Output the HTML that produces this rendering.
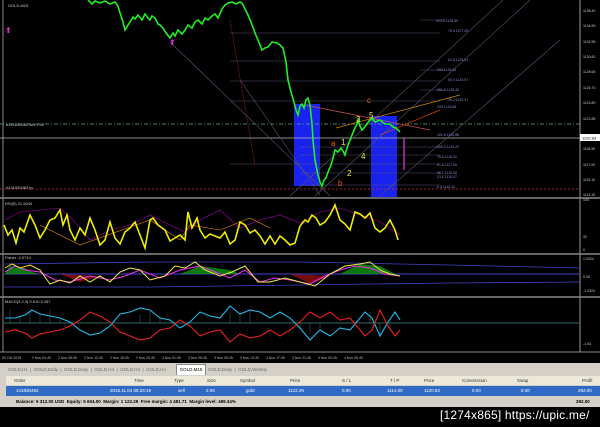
<!DOCTYPE html>
<html><head><style>
body{margin:0;width:600px;height:427px;background:#000;overflow:hidden;font-family:"Liberation Sans",sans-serif}
svg{position:absolute;left:0;top:0}
.t{font-size:4px;fill:#ccc}
</style></head><body>
<svg width="600" height="427" viewBox="0 0 600 427">
<rect width="600" height="427" fill="#000"/>
<line x1="3" y1="0" x2="3" y2="352" stroke="#888" stroke-width="1"/>
<line x1="580" y1="0" x2="580" y2="352" stroke="#999" stroke-width="1"/>
<line x1="0" y1="198" x2="600" y2="198" stroke="#888" stroke-width="1.5"/>
<line x1="0" y1="254" x2="600" y2="254" stroke="#888" stroke-width="1.5"/>
<line x1="0" y1="297" x2="600" y2="297" stroke="#888" stroke-width="1.5"/>
<line x1="0" y1="352" x2="600" y2="352" stroke="#888" stroke-width="1"/>
<rect x="294" y="104" width="26" height="82" fill="#1a22ee"/>
<rect x="371" y="116" width="26" height="81" fill="#1a22ee"/>
<line x1="0" y1="138" x2="600" y2="138" stroke="#bbb" stroke-width="0.8"/>
<line x1="0" y1="124" x2="580" y2="124" stroke="#6a8" stroke-width="0.7" stroke-dasharray="4,2,1,2"/>
<line x1="0" y1="189" x2="580" y2="189" stroke="#c33" stroke-width="0.7" stroke-dasharray="2,2"/>
<g stroke="#557" stroke-width="0.6">
<line x1="230" y1="33" x2="440" y2="33"/><line x1="230" y1="61" x2="440" y2="61"/><line x1="230" y1="81" x2="440" y2="81"/><line x1="230" y1="101" x2="440" y2="101"/><line x1="230" y1="164" x2="440" y2="164"/><line x1="300" y1="147" x2="440" y2="147"/><line x1="300" y1="155" x2="440" y2="155"/><line x1="300" y1="173" x2="440" y2="173"/><line x1="300" y1="185" x2="440" y2="185"/>
<line x1="420" y1="20" x2="445" y2="20"/><line x1="420" y1="70" x2="445" y2="70"/><line x1="420" y1="90" x2="445" y2="90"/>
</g>
<g stroke="#557" stroke-width="0.6" fill="none">
<line x1="170" y1="42" x2="330" y2="196"/>
<line x1="290" y1="196" x2="503" y2="0"/>
<line x1="315" y1="196" x2="530" y2="0"/>
<line x1="380" y1="196" x2="560" y2="40"/>
<line x1="240" y1="80" x2="320" y2="195"/>
</g>
<line x1="336" y1="128" x2="460" y2="95" stroke="#c80" stroke-width="0.7"/>
<line x1="380" y1="135" x2="440" y2="110" stroke="#c40" stroke-width="0.7"/>
<line x1="305" y1="105" x2="430" y2="130" stroke="#c55" stroke-width="0.7"/>
<line x1="230" y1="20" x2="255" y2="165" stroke="#a22" stroke-width="0.8" stroke-dasharray="1,1"/>
<line x1="404" y1="138" x2="404" y2="170" stroke="#e3e" stroke-width="1.2"/>
<polyline fill="none" stroke="#2e2" stroke-width="1.6" points="88,0 92,4 95,1 100,3 105,1 110,4 115,2 118,6 120,13 123,22 125,30 128,25 130,22 133,17 135,19 138,15 142,20 145,14 148,18 150,20 152,16 155,18 158,24 160,25 163,28 166,33 170,38 173,33 175,36 178,30 182,34 185,30 188,25 192,28 195,22 198,20 202,24 205,18 208,20 212,16 215,14 218,18 222,9 225,5 228,3 232,2 236,4 240,2 242,3 245,9 248,15 251,22 255,33 258,40 262,50 265,48 268,47 272,42 277,43 280,45 283,48 286,62 288,80 291,92 294,102 296,110 298,115 300,106 302,104 304,108 306,100 308,98 310,105 312,124 313,140 315,160 318,175 320,182 322,186 324,180 326,178 328,172 331,165 333,158 335,150 338,152 341,148 343,151 345,155 347,148 350,140 352,135 355,128 357,124 358,120 360,126 362,130 364,128 366,125 369,121 372,118 375,122 380,120 385,124 390,124 393,127 396,128 398,130 400,132"/>
<text x="356" y="122" font-size="8" fill="#ee3">3</text><text x="369" y="118" font-size="8" fill="#ee3">5</text>
<text x="341" y="145" font-size="8" fill="#ee3">1</text><text x="361" y="159" font-size="8" fill="#ee3">4</text>
<text x="347" y="176" font-size="8" fill="#ee3">2</text>
<text x="331" y="146" font-size="8" fill="#f60">a</text><text x="338" y="186" font-size="8" fill="#f42">b</text><text x="367" y="103" font-size="8" fill="#f60">c</text>
<text x="8" y="7" class="t">GOLD,M15</text>
<text x="6" y="126" class="t">#141830462 sell 2.00</text>
<text x="6" y="189" class="t">#141830462 tp</text>
<text x="5" y="33" font-size="8" fill="#d3d">⬆</text><text x="169" y="45" font-size="8" fill="#d3d">⬆</text>
<g class="t" style="font-size:3.5px;fill:#88c">
<text x="436" y="22">423.6 1128.89</text><text x="448" y="32">78.6 1127.25</text><text x="448" y="61">61.8 1126.51</text><text x="437" y="71">300 1126.53</text><text x="448" y="81">50.0 1125.97</text><text x="437" y="91">261.8 1125.40</text><text x="448" y="101">38.2 1125.37</text><text x="437" y="108">200 1124.68</text><text x="437" y="136">161.8 1120.88</text><text x="437" y="148">100.0 1119.29</text><text x="437" y="158">78.6 1118.41</text><text x="437" y="166">61.8 1117.69</text><text x="437" y="174">38.2 1116.58</text><text x="437" y="178">23.6 1115.47</text><text x="437" y="188">0.0 1114.22</text>
</g>
<g class="t" style="font-size:3.5px">
<text x="583" y="12">1136.40</text><text x="583" y="27">1134.50</text><text x="583" y="43">1132.55</text><text x="583" y="58">1130.60</text><text x="583" y="73">1128.65</text><text x="583" y="89">1126.70</text><text x="583" y="104">1124.80</text><text x="583" y="120">1122.85</text><text x="583" y="150">1118.95</text><text x="583" y="166">1117.00</text><text x="583" y="181">1115.10</text><text x="583" y="196">1113.15</text>
</g>
<rect x="580" y="134" width="20" height="7" fill="#fff"/><text x="582" y="139.5" font-size="4" fill="#000">1120.83</text>
<text x="5" y="205" class="t">RSI(5) 21.5044</text>
<polyline fill="none" stroke="#a0a" stroke-width="0.6" points="5,220 20,212 40,210 60,208 75,222 90,240 110,230 130,225 150,215 170,225 185,232 200,220 220,210 240,228 260,220 280,215 300,223 320,212 340,208 360,215 380,222 400,235"/>
<polyline fill="none" stroke="#e80" stroke-width="0.6" points="40,225 80,245 150,220 180,240 190,225 220,230 250,218 270,228"/>
<polyline fill="none" stroke="#ee0" stroke-width="1.6" points="4,225 8,235 12,230 16,243 20,228 24,232 30,215 35,225 40,238 45,230 50,220 55,218 60,210 63,225 67,215 70,230 75,240 80,228 85,235 90,218 95,230 100,245 105,240 110,222 115,238 120,244 125,232 130,228 135,222 140,235 145,248 150,220 153,218 158,225 165,230 170,241 175,238 180,235 185,240 188,212 192,228 197,218 200,230 205,238 210,234 215,236 220,238 225,232 230,244 235,240 240,222 245,225 250,233 255,230 260,236 265,244 270,236 275,244 280,236 285,240 290,245 295,243 300,226 305,220 308,222 312,215 316,218 320,225 325,222 330,215 335,205 340,220 345,224 350,230 355,212 360,214 365,218 370,213 375,228 380,232 385,228 390,220 395,230 398,240"/>
<g class="t" style="font-size:3.5px"><text x="583" y="201">100</text><text x="583" y="238">32</text><text x="583" y="251">0</text></g>
<text x="5" y="259" class="t">Fisher -4.0714</text>
<line x1="4" y1="274" x2="580" y2="274" stroke="#44c" stroke-width="1"/>
<polyline fill="none" stroke="#44c" stroke-width="0.8" points="4,264 150,262 300,262 450,265 580,268"/>
<polyline fill="none" stroke="#44c" stroke-width="0.8" points="4,287 150,287 300,285 450,283 580,282"/>
<polygon fill="#1a1" opacity="0.7" points="5,274 10,266 18,268 25,268 32,272 40,274 5,274"/>
<polygon fill="#a11" opacity="0.7" points="60,274 80,282 100,276 60,274"/>
<polygon fill="#1a1" opacity="0.7" points="180,274 200,266 215,268 230,270 240,274"/>
<polygon fill="#a11" opacity="0.7" points="290,274 310,284 330,276"/>
<polygon fill="#1a1" opacity="0.7" points="340,274 360,264 380,266 395,274"/>
<polyline fill="none" stroke="#e3e" stroke-width="1" points="5,272 15,266 25,270 40,272 55,280 70,282 90,276 110,280 125,276 140,270 160,278 180,270 200,266 215,272 230,278 245,270 260,282 275,278 290,280 310,284 325,276 340,270 355,266 370,268 385,274 400,276"/>
<polyline fill="none" stroke="#ee4" stroke-width="1" points="5,268 12,264 20,268 30,265 40,270 50,284 60,280 70,283 80,276 90,282 100,276 110,282 120,272 130,268 140,270 150,280 165,276 175,266 185,268 195,262 205,270 220,276 232,272 245,266 258,282 270,282 285,278 300,282 315,286 330,274 345,266 360,264 370,262 380,270 390,274 400,276"/>
<g class="t" style="font-size:3.5px"><text x="583" y="260">1.0324</text><text x="583" y="278">0.00</text><text x="583" y="292">-1.0324</text></g>
<text x="5" y="303" class="t">MACD(3,2,3) 0.610 0.287</text>
<line x1="4" y1="323" x2="580" y2="323" stroke="#366" stroke-width="1"/>
<g stroke="#4cc" stroke-width="0.5" opacity="0.6">
<line x1="10" y1="323" x2="10" y2="310"/><line x1="20" y1="323" x2="20" y2="316"/><line x1="30" y1="323" x2="30" y2="312"/><line x1="40" y1="323" x2="40" y2="314"/><line x1="50" y1="323" x2="50" y2="310"/><line x1="60" y1="323" x2="60" y2="318"/><line x1="140" y1="323" x2="140" y2="314"/><line x1="150" y1="323" x2="150" y2="310"/><line x1="160" y1="323" x2="160" y2="316"/><line x1="230" y1="323" x2="230" y2="312"/><line x1="240" y1="323" x2="240" y2="314"/><line x1="250" y1="323" x2="250" y2="310"/><line x1="300" y1="323" x2="300" y2="330"/><line x1="310" y1="323" x2="310" y2="334"/><line x1="320" y1="323" x2="320" y2="328"/><line x1="370" y1="323" x2="370" y2="312"/><line x1="380" y1="323" x2="380" y2="336"/><line x1="390" y1="323" x2="390" y2="328"/>
</g>
<polyline fill="none" stroke="#2be" stroke-width="1.1" points="5,318 15,318 25,315 32,310 40,314 50,316 60,318 70,322 80,330 90,335 100,333 110,326 120,314 130,312 140,308 150,310 160,318 170,320 180,328 190,322 200,312 210,316 220,318 230,306 240,314 250,310 260,312 270,318 280,312 290,318 300,328 310,340 320,330 330,336 340,328 350,330 360,318 365,312 372,318 380,336 388,322 395,312 400,320"/>
<polyline fill="none" stroke="#e22" stroke-width="1.1" points="5,332 15,330 25,333 32,338 40,334 50,332 60,330 70,326 80,320 90,312 100,316 110,322 120,332 130,336 140,340 150,338 160,330 170,328 180,320 190,326 200,336 210,332 220,330 230,342 240,334 250,338 260,336 270,330 280,336 290,330 300,322 310,312 320,318 330,312 340,320 350,318 360,330 365,336 372,330 380,310 388,326 395,336 400,330"/>
<text x="583" y="345" class="t" style="font-size:3.5px">-1.03</text>
<g class="t" style="font-size:3.5px;fill:#bbb">
<text x="2" y="359">30 Oct 2015</text><text x="32" y="359">2 Nov 04:45</text><text x="58" y="359">2 Nov 08:45</text><text x="84" y="359">2 Nov 12:45</text><text x="110" y="359">2 Nov 16:45</text><text x="136" y="359">2 Nov 20:45</text><text x="162" y="359">3 Nov 01:45</text><text x="188" y="359">3 Nov 05:45</text><text x="214" y="359">3 Nov 09:45</text><text x="240" y="359">3 Nov 13:45</text><text x="266" y="359">3 Nov 17:45</text><text x="292" y="359">3 Nov 21:45</text><text x="318" y="359">4 Nov 02:45</text><text x="344" y="359">4 Nov 06:45</text>
</g>
</svg>
<div style="position:absolute;left:0;top:363px;width:600px;height:12px;background:#d4d0c8;font-size:4.5px;color:#666">
<span style="position:absolute;left:8px;top:4px">GOLD,H1 &nbsp;| &nbsp;GOLD,Daily &nbsp;| &nbsp;GOLD,Daily &nbsp;| &nbsp;GOLD,H4 &nbsp;| &nbsp;GOLD,H4 &nbsp;| &nbsp;GOLD,H4</span>
<span style="position:absolute;left:176px;top:1px;width:28px;height:10px;background:#fff;border:1px solid #888;color:#000;line-height:10px;text-align:center">GOLD,M15</span>
<span style="position:absolute;left:208px;top:4px">GOLD,Daily &nbsp;| &nbsp;GOLD,Weekly</span>
</div>
<div style="position:absolute;left:0;top:375px;width:600px;height:32px;background:#d4d0c8;font-size:4.5px"></div>
<div style="position:absolute;left:6px;top:376px;width:594px;height:9px;background:#ece9d8;font-size:4.5px;line-height:9px;color:#333">
<span style="position:absolute;left:8px">Order</span><span style="position:absolute;left:128px">Time</span><span style="position:absolute;left:168px">Type</span><span style="position:absolute;left:201px">Size</span><span style="position:absolute;left:234px">Symbol</span><span style="position:absolute;left:284px">Price</span><span style="position:absolute;left:336px">S / L</span><span style="position:absolute;left:384px">T / P</span><span style="position:absolute;left:418px">Price</span><span style="position:absolute;left:456px">Commission</span><span style="position:absolute;left:511px">Swap</span><span style="position:absolute;left:576px">Profit</span>
</div>
<div style="position:absolute;left:6px;top:386px;width:594px;height:10px;background:#316ac5;font-size:4.5px;line-height:10px;color:#fff">
<span style="position:absolute;left:10px">141830462</span><span style="position:absolute;left:104px">2015.11.04 05:33:19</span><span style="position:absolute;left:172px">sell</span><span style="position:absolute;left:200px">2.00</span><span style="position:absolute;left:240px">gold</span><span style="position:absolute;left:282px">1122.29</span><span style="position:absolute;left:336px">0.00</span><span style="position:absolute;left:381px">1114.00</span><span style="position:absolute;left:418px">1120.83</span><span style="position:absolute;left:466px">0.00</span><span style="position:absolute;left:515px">0.00</span><span style="position:absolute;left:572px">292.00</span>
</div>
<div style="position:absolute;left:6px;top:397px;width:594px;height:9px;background:#d4d0c8;font-size:4.5px;line-height:9px;color:#000;font-weight:bold">
<span style="position:absolute;left:10px">Balance: 5 312.00 USD &nbsp;Equity: 5 604.00 &nbsp;Margin: 1 122.29 &nbsp;Free margin: 4 481.71 &nbsp;Margin level: 499.34%</span><span style="position:absolute;left:570px">292.00</span>
</div>
<div style="position:absolute;left:440px;top:408px;white-space:nowrap;font-family:'Liberation Sans',sans-serif;font-size:12px;line-height:14px;color:#fff;letter-spacing:0.2px">[1274x865] https://upic.me/</div>
</body></html>
